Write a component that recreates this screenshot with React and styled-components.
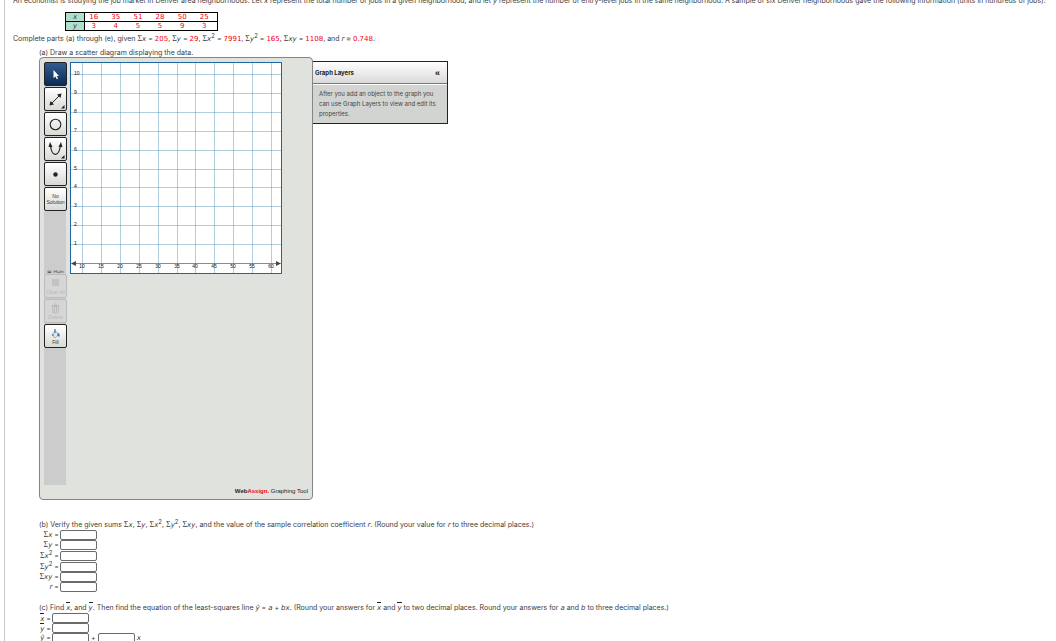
import React from "react";
import styled, { createGlobalStyle } from "styled-components";

const Global = createGlobalStyle`
  * { box-sizing: border-box; }
  body {
    margin: 0;
    background: #fff;
    color: #3c3c3c;
    font-family: Inter, "DejaVu Sans", sans-serif;
    font-size: 7px;
    line-height: 10px;
  }
  i {
    font-family: Verdana, "DejaVu Sans", sans-serif;
    line-height: 0;
  }
`;

const Page = styled.main`
  margin-left: 4px;
  padding-left: 8px;
  border-left: 1px solid #c8c8c8;
  height: 100vh;
  overflow: hidden;
`;

const Line = styled.p`
  margin: ${(p) => p.$margin || "0"};
  white-space: nowrap;
  line-height: ${(p) => p.$height || 10}px;
`;

const Red = styled.span`
  color: #f00020;
  font-family: Verdana, "DejaVu Sans", sans-serif;
  line-height: 0;
`;

const Sup = styled.sup`
  font-size: 6px;
  line-height: 0;
  vertical-align: 3px;
`;

const Sigma = styled.span`
  font-family: "Liberation Serif", serif;
  font-size: 8px;
  line-height: 0;
`;

const Bar = styled.i`
  display: inline-block;
  height: 11px;
  line-height: 10px;
  border-top: 1px solid #222;
`;

const DataTable = styled.table`
  margin: 6px 0 0 52px;
  width: 153px;
  border: 1px solid #000;
  border-collapse: collapse;
  table-layout: fixed;
  font-family: Verdana, "DejaVu Sans", sans-serif;
`;

const DataRow = styled.tr`
  height: 9px;
  border-top: 1px solid #000;
`;

const Head = styled.th`
  width: 19px;
  padding: 0;
  background: #b0dfce;
  border-right: 1px solid #000;
  font-weight: normal;
  line-height: 8px;
`;

const Cell = styled.td`
  padding: 0 4px 0 0;
  color: #f00020;
  text-align: center;
  line-height: 8px;
`;

const Part = styled.section`
  margin-left: 26px;
  margin-top: ${(p) => p.$top}px;
`;

const ToolRow = styled.div`
  display: flex;
  align-items: flex-start;
`;

const Tool = styled.div`
  display: flex;
  flex-direction: column;
  width: 274px;
  border: 1px solid #858585;
  border-radius: 4px;
  padding: 4px;
  background: #e0e2dd;
`;

const Work = styled.div`
  display: flex;
  gap: 3px;
  align-items: flex-start;
`;

const Palette = styled.div`
  display: flex;
  flex-direction: column;
  gap: 1px;
  width: 23px;
  height: 423px;
  background: linear-gradient(90deg, #cccccc 22px, transparent 22px);
`;

const ToolButton = styled.button`
  display: flex;
  flex-direction: column;
  flex: none;
  align-items: center;
  justify-content: center;
  width: 23px;
  height: 24px;
  padding: 0;
  border: 1px solid #222;
  border-radius: 2px;
  background: ${(p) => (p.$active ? "linear-gradient(#335c91, #0b2b55)" : "linear-gradient(#fff, #d7dad5)")};
  color: #333;
  font: 5px/6px Arial, "Liberation Sans", sans-serif;
  &:disabled {
    border-color: #bcbcbc;
    background: #d6d6d6;
    color: #b8b8b8;
  }
`;

const HelpButton = styled.button`
  flex: none;
  height: 3px;
  padding: 0;
  border: 0;
  background: none;
  overflow: hidden;
  color: #555;
  font: 5px/5px Arial, "Liberation Sans", sans-serif;
`;

const Spacer = styled.div`
  flex: none;
  height: 57px;
`;

const Graph = styled.svg`
  display: block;
  width: 212px;
  height: 212px;
  background: #fff;
  border: 1px solid #1f66a0;
`;

const Brand = styled.div`
  padding-top: 2px;
  text-align: right;
  color: #222;
  font: 6px/8px Arial, "Liberation Sans", sans-serif;
`;

const BrandRed = styled.b`
  color: #f00020;
`;

const Layers = styled.aside`
  width: 135px;
  margin-top: 4px;
  border: 1px solid #222;
  border-left: 0;
  border-radius: 0 1px 1px 0;
  background: #d2d4d1;
`;

const LayersHead = styled.header`
  display: flex;
  align-items: center;
  justify-content: space-between;
  height: 22px;
  padding: 0 7px 0 2px;
  background: linear-gradient(#fff, #dadada);
  border-bottom: 1px solid #777;
  box-shadow: 0 1px 0 #fff;
`;

const LayersTitle = styled.h2`
  margin: 0;
  font-size: 6px;
  color: #222;
`;

const Collapse = styled.button`
  border: 0;
  padding: 0;
  background: none;
  color: #111;
  font: bold 9px/10px Arial, "Liberation Sans", sans-serif;
`;

const LayersText = styled.p`
  margin: 0;
  padding: 5px 8px 4px 6px;
  color: #444;
  font-size: 6px;
  line-height: 10px;
`;

const Field = styled.div`
  display: flex;
  align-items: center;
  height: ${(p) => p.$height || 10}px;
`;

const Label = styled.label`
  width: ${(p) => p.$width}px;
  padding-right: 1px;
  text-align: right;
  white-space: nowrap;
`;

const Input = styled.input`
  width: 37px;
  height: 10px;
  padding: 0 2px;
  border: 1px solid #6b6b6b;
  border-radius: 2px;
  background: #fff;
  font: inherit;
`;

const After = styled.label`
  padding: 0 2px;
`;

const S = () => <Sigma>Σ</Sigma>;

const rows = [
  ["x", [16, 35, 51, 28, 50, 25]],
  ["y", [3, 4, 5, 5, 9, 3]],
];

const sums = [
  ["sum-x", <><S /><i>x</i></>, 10],
  ["sum-y", <><S /><i>y</i></>, 10],
  ["sum-x2", <><S /><i>x</i><Sup>2</Sup></>, 11],
  ["sum-y2", <><S /><i>y</i><Sup>2</Sup></>, 11],
  ["sum-xy", <><S /><i>xy</i></>, 10],
  ["corr", <i>r</i>, 10],
];

const ticks = Array.from({ length: 11 }, (_, i) => i);
const step = 18.9;

function GraphGrid() {
  return (
    <Graph viewBox="0 0 210 210" role="img" aria-label="Scatter diagram">
      <g stroke="#3d8ab5" strokeOpacity="0.42" strokeWidth="1">
        {ticks.map((i) => (
          <React.Fragment key={i}>
            <path d={`M${11.5 + Math.round(i * step)} 0V210`} />
            <path d={`M0 ${11.5 + Math.round(i * step)}H210`} />
          </React.Fragment>
        ))}
      </g>
      <path d="M3 200.5H207" stroke="#667" strokeOpacity="0.6" />
      <path d="M0 200.5l5-2.5v5zM210 200.5l-5-2.5v5z" fill="#444" />
      <g fill="#111" fontSize="5" fontFamily="Arial, Liberation Sans, sans-serif">
        {ticks.slice(0, 10).map((i) => (
          <text key={i} x="3" y={12 + Math.round(i * step)}>{10 - i}</text>
        ))}
        {ticks.map((i) => (
          <text key={i} x={11 + Math.round(i * step)} y="205" textAnchor="middle">{10 + i * 5}</text>
        ))}
      </g>
    </Graph>
  );
}

function Icon({ children, size = 21 }) {
  return <svg width={size} height={size} viewBox={`0 0 ${size} ${size}`} aria-hidden="true">{children}</svg>;
}

const Corner = () => <path d="M19.500 16v3.500H16z" fill="#222" />;

export default function App() {
  return (
    <>
      <Global />
      <Page>
        <Line $margin="-4px 0 0">
          An economist is studying the job market in Denver area neighborhoods. Let <i>x</i> represent the total number of jobs in a given neighborhood, and let <i>y</i> represent the number of entry-level jobs in the same neighborhood. A sample of six Denver neighborhoods gave the following information (units in hundreds of jobs).
        </Line>
        <DataTable>
          <tbody>
            {rows.map(([name, values]) => (
              <DataRow key={name}>
                <Head scope="row"><i>{name}</i></Head>
                {values.map((v, i) => <Cell key={i}>{v}</Cell>)}
              </DataRow>
            ))}
          </tbody>
        </DataTable>
        <Line $margin="3px 0 0">
          Complete parts (a) through (e), given <S /><i>x</i> = <Red>205</Red>, <S /><i>y</i> = <Red>29</Red>, <S /><i>x</i><Sup>2</Sup> = <Red>7991</Red>, <S /><i>y</i><Sup>2</Sup> = <Red>165</Red>, <S /><i>xy</i> = <Red>1108</Red>, and <i>r</i> ≈ <Red>0.748</Red>.
        </Line>

        <Part $top={4}>
          <Line $height={9}>(a) Draw a scatter diagram displaying the data.</Line>
          <ToolRow>
            <Tool>
              <Work>
                <Palette>
                  <ToolButton $active aria-label="Select">
                    <Icon><path d="M8.500 6v8l2-1.500 1.200 2.700 1.300-.6-1.200-2.600h2.200z" fill="#fff" /></Icon>
                  </ToolButton>
                  <ToolButton aria-label="Line">
                    <Icon>
                      <path d="M6 15L15 6" stroke="#222" />
                      <path d="M4.500 16.500l1-4.500 3.500 3.500zM16.500 4.500l-4.500 1 3.500 3.500z" fill="#222" />
                      <Corner />
                    </Icon>
                  </ToolButton>
                  <ToolButton aria-label="Circle">
                    <Icon><circle cx="10.500" cy="10.500" r="5.300" fill="none" stroke="#222" strokeWidth="1.100" /></Icon>
                  </ToolButton>
                  <ToolButton aria-label="Parabola">
                    <Icon>
                      <path d="M5.500 6C6.500 18.500 14 18.500 15.500 6" fill="none" stroke="#222" strokeWidth="1.200" />
                      <path d="M5 3l2.500 5H3.500zM16 3l1.500 5h-4z" fill="#222" />
                      <Corner />
                    </Icon>
                  </ToolButton>
                  <ToolButton aria-label="Point">
                    <Icon><circle cx="10.500" cy="10.500" r="2.200" fill="#222" /></Icon>
                  </ToolButton>
                  <ToolButton><span>No</span><span>Solution</span></ToolButton>
                  <Spacer />
                  <HelpButton>▣ Help</HelpButton>
                  <ToolButton disabled>
                    <Icon size={11}><path d="M2 1h7v7H2z" fill="#c2c2c2" /></Icon>
                    <span>Clear All</span>
                  </ToolButton>
                  <ToolButton disabled>
                    <Icon size={11}>
                      <path d="M2.500 3.500h6l-.5 6.500h-5zM1.500 2.500h8M4 1h3" fill="none" stroke="#bcbcbc" />
                      <path d="M4.500 4v5M6.500 4v5" stroke="#bcbcbc" />
                    </Icon>
                    <span>Delete</span>
                  </ToolButton>
                  <ToolButton>
                    <Icon size={11}>
                      <path d="M5 3l4 3-4 4-3-3z" fill="#dfe5ec" stroke="#889" strokeWidth=".6" />
                      <path d="M5 1v4" stroke="#3d70b2" strokeWidth="1.200" />
                      <path d="M8 5c2 1 2 3 1 4l-2-2zM2 7l1-1 1 1-1 1z" fill="#3d70b2" />
                    </Icon>
                    <span>Fill</span>
                  </ToolButton>
                </Palette>
                <GraphGrid />
              </Work>
              <Brand><b>Web</b><BrandRed>Assign.</BrandRed> Graphing Tool</Brand>
            </Tool>
            <Layers>
              <LayersHead>
                <LayersTitle>Graph Layers</LayersTitle>
                <Collapse aria-label="Collapse">«</Collapse>
              </LayersHead>
              <LayersText>After you add an object to the graph you can use Graph Layers to view and edit its properties.</LayersText>
            </Layers>
          </ToolRow>
        </Part>

        <Part $top={20}>
          <Line>
            (b) Verify the given sums <S /><i>x</i>, <S /><i>y</i>, <S /><i>x</i><Sup>2</Sup>, <S /><i>y</i><Sup>2</Sup>, <S /><i>xy</i>, and the value of the sample correlation coefficient <i>r</i>. (Round your value for <i>r</i> to three decimal places.)
          </Line>
          {sums.map(([id, label, height]) => (
            <Field key={id} $height={height}>
              <Label htmlFor={id} $width={21}>{label} =</Label>
              <Input id={id} />
            </Field>
          ))}
        </Part>

        <Part $top={10}>
          <Line>
            (c) Find <Bar>x</Bar>, and <Bar>y</Bar>. Then find the equation of the least-squares line <i>ŷ</i> = <i>a</i> + <i>bx</i>. (Round your answers for <Bar>x</Bar> and <Bar>y</Bar> to two decimal places. Round your answers for <i>a</i> and <i>b</i> to three decimal places.)
          </Line>
          <Field>
            <Label htmlFor="mean-x" $width={13}><Bar>x</Bar> =</Label>
            <Input id="mean-x" />
          </Field>
          <Field>
            <Label htmlFor="mean-y" $width={13}><Bar>y</Bar> =</Label>
            <Input id="mean-y" />
          </Field>
          <Field>
            <Label htmlFor="intercept" $width={13}><i>ŷ</i> =</Label>
            <Input id="intercept" />
            <After htmlFor="slope">+</After>
            <Input id="slope" />
            <After htmlFor="slope"><i>x</i></After>
          </Field>
        </Part>
      </Page>
    </>
  );
}
